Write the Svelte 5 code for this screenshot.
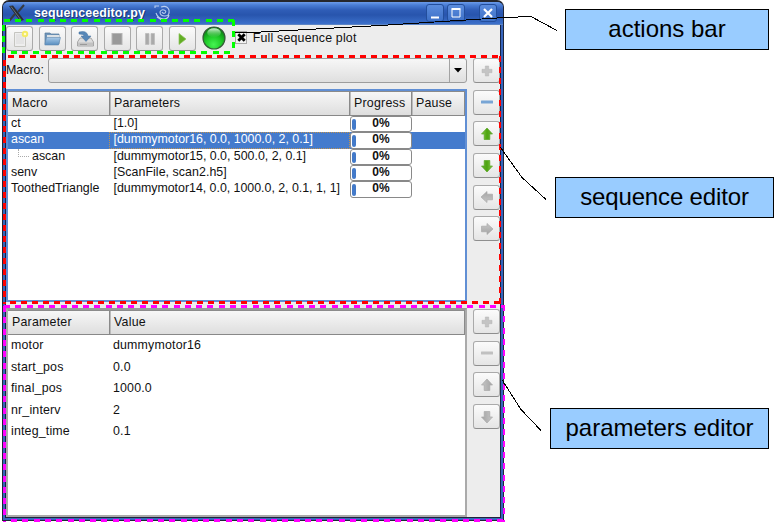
<script>
  const tools = ['new', 'open', 'save', 'stop', 'pause', 'play'];
  const rows = [
    { name: 'ct', params: '[1.0]', ls: 0 },
    { name: 'ascan', params: '[dummymotor16, 0.0, 1000.0, 2, 0.1]', selected: true, ls: -0.01 },
    { name: 'ascan', params: '[dummymotor15, 0.0, 500.0, 2, 0.1]', child: true, ls: -0.01 },
    { name: 'senv', params: '[ScanFile, scan2.h5]', ls: 0.05 },
    { name: 'ToothedTriangle', params: '[dummymotor14, 0.0, 1000.0, 2, 0.1, 1, 1]', ls: -0.02 }
  ];
  const values = [
    ['motor', 'dummymotor16'],
    ['start_pos', '0.0'],
    ['final_pos', '1000.0'],
    ['nr_interv', '2'],
    ['integ_time', '0.1']
  ];
  const macroButtons = [
    ['plus', false], ['minus', true], ['up', true], ['down', true], ['left', false], ['right', false]
  ];
  const paramButtons = [['plus', false], ['minus', false], ['up', false], ['down', false]];
  const turn = { up: 0, right: 90, down: 180, left: 270 };
</script>

{#snippet sideIcon(kind, on)}
  <svg width="16" height="16" viewBox="0 0 16 16">
    {#if kind === 'plus'}
      <path d="M6.3 3h3.4v3.3H13v3.4H9.700V13H6.300V9.700H3V6.300H6.300Z" fill="#c4c4c4" stroke="#b4b4b4" stroke-width=".5" />
    {:else if kind === 'minus'}
      <rect x="2" y="6.500" width="12" height="3" rx=".5" fill={on ? '#78a5d5' : '#c0c0c0'} />
    {:else}
      <path transform={`rotate(${turn[kind]} 8 8)`} d="M8 2 13.500 8H10.800V13.500H5.200V8H2.500Z" fill={on ? 'url(#leaf)' : 'url(#ash)'} stroke={on ? '#57a521' : '#a9a9a9'} stroke-width=".7" />
    {/if}
  </svg>
{/snippet}

<main>
  <svg class="defs" width="0" height="0">
    <defs>
      <linearGradient id="leaf"><stop stop-color="#87c94a" /><stop offset=".5" stop-color="#4ea510" /><stop offset="1" stop-color="#67ae35" /></linearGradient>
      <linearGradient id="ash"><stop stop-color="#c6c6c6" /><stop offset="1" stop-color="#a4a4a4" /></linearGradient>
      <linearGradient id="blue" x2="0" y2="1"><stop stop-color="#a8cae8" /><stop offset="1" stop-color="#588dbf" /></linearGradient>
      <radialGradient id="led" cx=".48" cy=".8" r=".75"><stop stop-color="#45f452" /><stop offset=".5" stop-color="#1fcb28" /><stop offset="1" stop-color="#088111" /></radialGradient>
      <linearGradient id="shine" x2="0" y2="1"><stop stop-color="#d9f8db" /><stop offset="1" stop-color="#46c64c" stop-opacity=".2" /></linearGradient>
    </defs>
  </svg>

  <section class="window">
    <header class="titlebar">
      <svg width="20" height="20" viewBox="0 0 20 20">
        <path d="M2 3 6 2.500 17 17 13 18Z" fill="#292e36" /><path d="M17 2 11 9M8 11 2 18" stroke="#363b42" stroke-width="2" />
        <path d="M4 3.500 14 17" stroke="#68717d" />
      </svg>
      <span class="title">sequenceeditor.py</span>
      <svg class="swirl" width="17" height="18" viewBox="0 0 17 18" fill="none" stroke="#b9ccef" stroke-width="1.100">
        <path d="M1 4V2H5M7 3Q13 1 15 6Q16 12 11 12Q6 12 6 8Q7 5 10 6Q13 7 11 9Q9 10 8 8M2 9Q4 15 10 15Q14 15 15 11M3 13Q8 17 13 16" />
      </svg>
      <div class="controls">
        <i><svg width="16" height="16"><path d="M4 12.500H12" stroke="#fff" stroke-width="2" /></svg></i>
        <i><svg width="16" height="16"><path d="M4 4.500H12V12H4Z" fill="none" stroke="#fff" /><path d="M3.500 4H12.500" stroke="#fff" stroke-width="2" /></svg></i>
        <i class="close"><svg width="16" height="16"><path d="M4 4 12 12M12 4 4 12" stroke="#fff" stroke-width="2.200" /></svg></i>
      </div>
    </header>

    <div class="body">
      <div class="toolbar">
        {#each tools as tool}
          <button aria-label={tool}>
            <svg width="20" height="20" viewBox="0 0 20 20">
              {#if tool === 'new'}
                <path d="M4.500 3.500H15.500V17.500H4.500Z" fill="#eee" stroke="#c5c5c0" /><path d="M6 5H14V15H6Z" fill="#e4e4e4" />
                <circle cx="15" cy="5" r="3.200" fill="#f4ea62" /><circle cx="15" cy="5" r="1.300" fill="#fffbd0" />
              {:else if tool === 'open'}
                <path d="M3 4H8L9 5H17V15H3Z" fill="#7195b8" stroke="#587d9f" stroke-width=".7" />
                <path d="M5 6H17V10H5Z" fill="#dce2e6" /><path d="M4.500 8.500H18.500L16.500 16H2.800Z" fill="url(#blue)" stroke="#6189b0" stroke-width=".6" />
              {:else if tool === 'save'}
                <path d="M5 9H16L18.500 13V17H2.500V13Z" fill="#ddd" stroke="#999" stroke-width=".8" /><path d="M3 13.500H18V17H3Z" fill="#c2c2c2" />
                <path d="M5 15.500H12" stroke="#999" />
                <path d="M4 3Q12 1 13 7H16L11 12.500 6 7H9Q9 5 4 5Z" fill="#5787b7" stroke="#416f9e" stroke-width=".5" />
              {:else if tool === 'stop'}
                <rect x="5" y="4.500" width="10" height="11" fill="#999" stroke="#b5b5b5" />
              {:else if tool === 'pause'}
                <path d="M5.500 4.500H9V15.500H5.500ZM11 4.500H14.500V15.500H11Z" fill="#aaa" stroke="#bdbdbd" stroke-width=".8" />
              {:else}
                <path d="M7 4.500 14 10 7 15.500Z" fill="#62ae25" stroke="#8bc259" stroke-width=".7" />
              {/if}
            </svg>
          </button>
        {/each}
        <svg class="led" width="24" height="24" viewBox="0 0 24 24">
          <circle cx="12" cy="12" r="11" fill="url(#led)" stroke="#355c38" stroke-width="1.200" />
          <ellipse cx="12" cy="6.800" rx="6.800" ry="4.600" fill="url(#shine)" />
        </svg>
        <span class="check"><svg width="11" height="11"><path d="M2.300 2.300 8.700 8.700M8.700 2.300 2.300 8.700" stroke="#000" stroke-width="2.800" /></svg></span>
        <span class="plot">Full sequence plot</span>
      </div>

      <div class="macro">
        <span class="label">Macro:</span>
        <div class="combo"><span><svg width="8" height="5"><path d="M0 0H8L4 4.500Z" /></svg></span></div>
      </div>

      <div class="upper">
        <div class="list">
          <div class="head seq"><b>Macro</b><b>Parameters</b><b>Progress</b><b>Pause</b></div>
          {#each rows as row}
            <div class="row seq" class:selected={row.selected}>
              <span class:child={row.child}>{row.name}</span>
              <span class="params" style:letter-spacing={`${row.ls}px`}>{row.params}</span>
              <span class="bar"><em></em>0%</span>
              <span></span>
            </div>
          {/each}
        </div>
        <div class="side">
          {#each macroButtons as [kind, on]}
            <button aria-label={kind}>{@render sideIcon(kind, on)}</button>
          {/each}
        </div>
      </div>

      <div class="lower">
        <div class="table">
          <div class="head par"><b>Parameter</b><b>Value</b></div>
          <div class="values">
            {#each values as [name, value]}
              <div class="par"><span>{name}</span><span>{value}</span></div>
            {/each}
          </div>
        </div>
        <div class="side">
          {#each paramButtons as [kind, on]}
            <button aria-label={kind}>{@render sideIcon(kind, on)}</button>
          {/each}
        </div>
      </div>
    </div>
  </section>

  <svg class="overlay" width="778" height="528" fill="none" shape-rendering="crispEdges">
    <g stroke="#00ff00" stroke-width="3" stroke-dasharray="6 5.200">
      <path d="M4 20.500H235" /><path d="M3.500 25V54" /><path d="M233.500 20V54" /><path d="M11 52.500H235" />
    </g>
    <g stroke="#ff0000" stroke-width="3" stroke-dasharray="5.500 5.500">
      <path d="M8 56.500H501" /><path d="M4.500 60V304" /><path d="M500 56V304" stroke-width="2" /><path d="M10 302.500H501" />
    </g>
    <g stroke="#f0f" stroke-width="3" stroke-dasharray="6 5.300">
      <path d="M4 306.500H505" /><path d="M4.500 306V522" /><path d="M504 305V522" stroke-width="2" /><path d="M11 520.500H505" />
    </g>
    <g stroke="#000">
      <path d="M235 32.500H252L380 25.500 505 17.500 531 16.500 557 30.500" />
      <path d="M500.500 147.500 522 177.500 546 199.500" />
      <path d="M502.500 380.500 521 409.500 541 430.500" />
    </g>
  </svg>

  <div class="callout actions">actions bar</div>
  <div class="callout sequence">sequence editor</div>
  <div class="callout parameters">parameters editor</div>
</main>

<style>
  :global(body) { margin: 0; background: #fff; }
  main { position: relative; width: 778px; height: 528px; overflow: hidden; background: #fff; font: 12.400px/16px "Liberation Sans", Arial, sans-serif; color: #111; letter-spacing: 0; }
  * { box-sizing: border-box; }
  svg { display: block; flex: none; }
  .defs, .overlay { position: absolute; left: 0; top: 0; }
  .overlay { pointer-events: none; }
  .window { position: absolute; left: 2px; top: 0; width: 502px; height: 521px; display: flex; flex-direction: column; background: #3765bd; border: 1px solid #202638; border-top: 2px solid #25262c; border-radius: 7px 7px 0 0; overflow: hidden; }
  .titlebar { height: 23px; flex: none; display: flex; align-items: center; padding-left: 4px; background: linear-gradient(#6c9cea 0, #4a7dd5 3px, #2f5db7 8px, #2855ad 13px, #3c70cb 22px); border-bottom: 1px solid #5c84c5; }
  .title { margin-left: 7px; color: #fff; font-weight: bold; letter-spacing: .13px; text-shadow: 1px 1px #173774; }
  .swirl { margin-left: 9px; }
  .controls { display: flex; margin: 0 6px 0 auto; gap: 3px; }
  .controls i { width: 18px; height: 18px; border: 1px solid #234e9c; border-radius: 3px; background: linear-gradient(#5b8cdd, #3d70c7); }
  .controls .close { margin-left: 11px; }
  .body { flex: 1; min-height: 0; margin: 0 2px 2px; border-left: 1px solid #172447; border-right: 1px solid #172447; border-bottom: 1px solid #20243a; background: #ededed; display: flex; flex-direction: column; }
  button { width: 27px; height: 25px; padding: 0; display: flex; align-items: center; justify-content: center; flex: none; border: 1px solid #aaa; border-bottom-color: #8e8e8e; border-radius: 3px; background: linear-gradient(#fbfbfb, #e5e5e5); }
  .toolbar { height: 33px; flex: none; display: flex; padding-top: 1px; gap: 5.600px; }
  .led { margin-left: 0; }
  .check { margin: 5px 0 0 4px; width: 12px; height: 13px; border: 1px solid #aaa; background: #f3f3f3; }
  .plot { margin-top: 4px; letter-spacing: .18px; margin-left: 0; }
  .macro { height: 25px; flex: none; display: flex; width: 461px; }
  .label { width: 42px; padding-top: 4px; }
  .combo { flex: 1; border: 1px solid #9d9d9d; border-radius: 3px; background: linear-gradient(#f7f7f7, #dfdfdf); display: flex; justify-content: flex-end; }
  .combo span { width: 17px; border-left: 1px solid #a3a3a3; display: flex; align-items: center; justify-content: center; }
  .upper { height: 213px; margin-top: 6px; flex: none; display: flex; }
  .list { width: 461px; border: 2px solid #618fd4; background: #fff; }
  .seq { display: grid; grid-template-columns: 102px 240px 62px 1fr; }
  .head { height: 25px; background: linear-gradient(#f7f7f7, #dedede); border-top: 1px solid #8b8b8b; border-bottom: 1px solid #888; }
  .head b { font-weight: normal; border-right: 1px solid #8a8a8a; border-left: 1px solid #bbb; padding: 3px 0 0 3px; letter-spacing: .22px; }
  .head b:first-child { border-left: 0; padding-left: 4px; }
  .row { height: 16.350px; line-height: 15px; padding-left: 3px; grid-template-columns: 102px 237px 62px 1fr; }
  .selected { background: #447bcd; color: #fff; }
  .params { padding-left: .5px; white-space: nowrap; }
  .selected .params { border: 1px dotted #c0924e; margin-left: -4px; padding-left: 3.500px; line-height: 13px; }
  .child { position: relative; padding-left: 21px; }
  .child::before { content: ''; position: absolute; left: 7px; top: 0; width: 10px; height: 7px; border-left: 1px dotted #aaa; border-bottom: 1px dotted #aaa; }
  .bar { position: relative; border: 1px solid #898989; border-radius: 3px; background: #fff; color: #111; font-weight: bold; text-align: center; line-height: 13px; font-size: 12px; }
  .bar em { position: absolute; left: 1px; top: 2px; bottom: 1px; width: 4px; border-radius: 2px; background: #437ac9; }
  .side { margin: 0 0 0 6px; display: flex; flex-direction: column; gap: 6.700px; }
  .upper .side { margin-top: -31px; }
  .lower { flex: 1; min-height: 0; margin-top: 6px; display: flex; }
  .lower .side { margin-top: 1px; }
  .table { width: 461px; border: 2px solid #aaa; border-top-color: #999; background: #fff; }
  .par { display: grid; grid-template-columns: 102px 1fr; }
  .values { padding: 0 0 0 3px; }
  .values .par { height: 21.500px; line-height: 20px; letter-spacing: .17px; }
  .callout { position: absolute; height: 41px; border: 1px solid #000; background: #99ccff; color: #000; font-size: 24px; line-height: 38px; text-align: center; letter-spacing: 0; white-space: nowrap; }
  .actions { left: 565px; top: 9px; width: 204px; }
  .sequence { left: 555px; top: 177px; width: 219px; letter-spacing: -.15px; }
  .parameters { left: 550px; top: 408px; width: 219px; }
</style>
